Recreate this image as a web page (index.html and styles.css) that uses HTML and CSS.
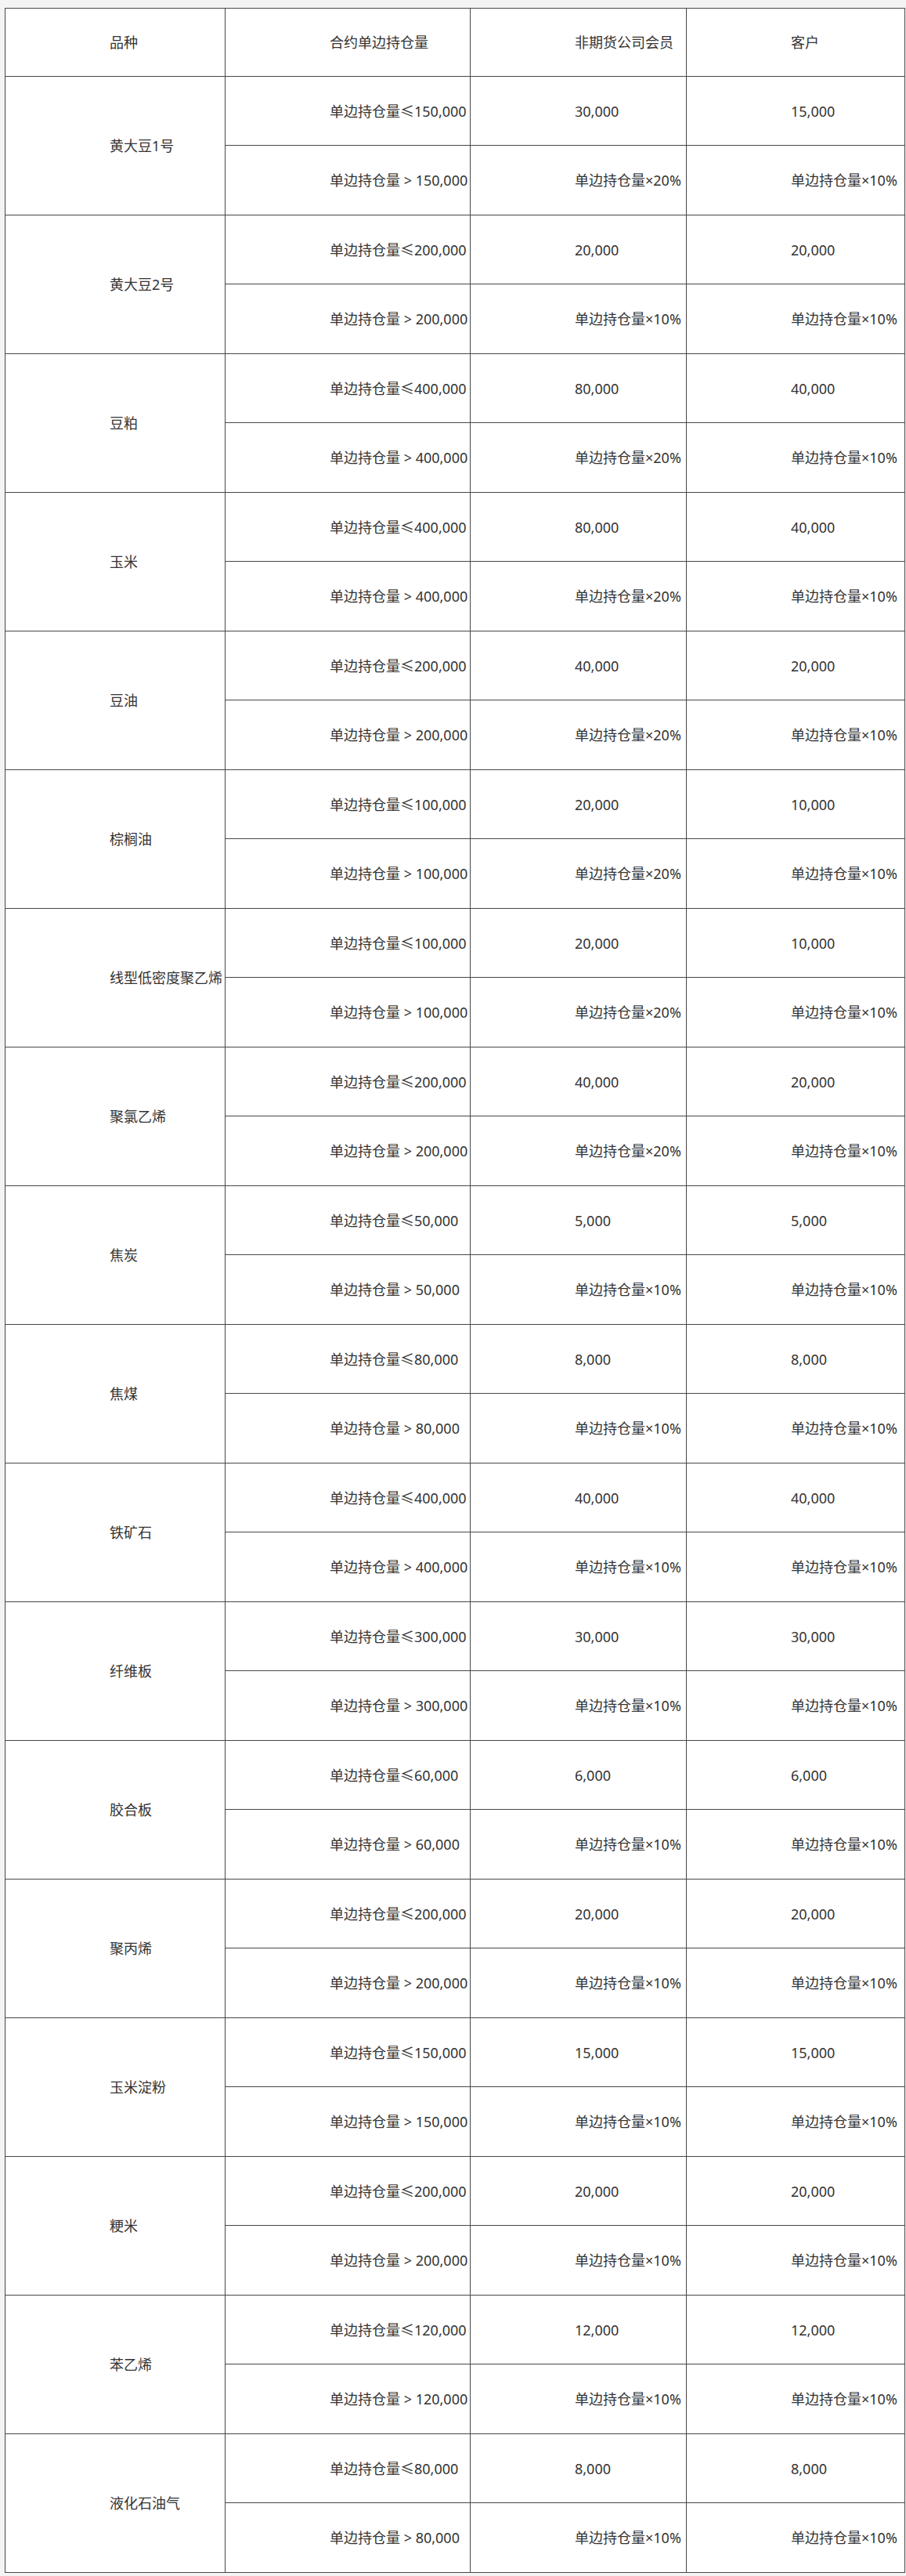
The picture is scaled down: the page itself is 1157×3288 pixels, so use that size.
FILE: index.html
```html
<!DOCTYPE html>
<html lang="zh-CN">
<head>
<meta charset="utf-8">
<title>持仓限额</title>
<link rel="stylesheet" href="styles.css">
</head>
<body>
<table class="limits">
<colgroup>
<col class="c1"><col class="c2"><col class="c3"><col class="c4">
</colgroup>
<tbody>
<tr class="head"><td>品种</td><td>合约单边持仓量</td><td>非期货公司会员</td><td>客户</td></tr>

<tr class="ra"><td rowspan="2">黄大豆1号</td><td>单边持仓量≤150,000</td><td>30,000</td><td>15,000</td></tr>
<tr class="rb"><td>单边持仓量 &gt; 150,000</td><td>单边持仓量×20%</td><td>单边持仓量×10%</td></tr>

<tr class="ra"><td rowspan="2">黄大豆2号</td><td>单边持仓量≤200,000</td><td>20,000</td><td>20,000</td></tr>
<tr class="rb"><td>单边持仓量 &gt; 200,000</td><td>单边持仓量×10%</td><td>单边持仓量×10%</td></tr>

<tr class="ra"><td rowspan="2">豆粕</td><td>单边持仓量≤400,000</td><td>80,000</td><td>40,000</td></tr>
<tr class="rb"><td>单边持仓量 &gt; 400,000</td><td>单边持仓量×20%</td><td>单边持仓量×10%</td></tr>

<tr class="ra"><td rowspan="2">玉米</td><td>单边持仓量≤400,000</td><td>80,000</td><td>40,000</td></tr>
<tr class="rb"><td>单边持仓量 &gt; 400,000</td><td>单边持仓量×20%</td><td>单边持仓量×10%</td></tr>

<tr class="ra"><td rowspan="2">豆油</td><td>单边持仓量≤200,000</td><td>40,000</td><td>20,000</td></tr>
<tr class="rb"><td>单边持仓量 &gt; 200,000</td><td>单边持仓量×20%</td><td>单边持仓量×10%</td></tr>

<tr class="ra"><td rowspan="2">棕榈油</td><td>单边持仓量≤100,000</td><td>20,000</td><td>10,000</td></tr>
<tr class="rb"><td>单边持仓量 &gt; 100,000</td><td>单边持仓量×20%</td><td>单边持仓量×10%</td></tr>

<tr class="ra"><td rowspan="2">线型低密度聚乙烯</td><td>单边持仓量≤100,000</td><td>20,000</td><td>10,000</td></tr>
<tr class="rb"><td>单边持仓量 &gt; 100,000</td><td>单边持仓量×20%</td><td>单边持仓量×10%</td></tr>

<tr class="ra"><td rowspan="2">聚氯乙烯</td><td>单边持仓量≤200,000</td><td>40,000</td><td>20,000</td></tr>
<tr class="rb"><td>单边持仓量 &gt; 200,000</td><td>单边持仓量×20%</td><td>单边持仓量×10%</td></tr>

<tr class="ra"><td rowspan="2">焦炭</td><td>单边持仓量≤50,000</td><td>5,000</td><td>5,000</td></tr>
<tr class="rb"><td>单边持仓量 &gt; 50,000</td><td>单边持仓量×10%</td><td>单边持仓量×10%</td></tr>

<tr class="ra"><td rowspan="2">焦煤</td><td>单边持仓量≤80,000</td><td>8,000</td><td>8,000</td></tr>
<tr class="rb"><td>单边持仓量 &gt; 80,000</td><td>单边持仓量×10%</td><td>单边持仓量×10%</td></tr>

<tr class="ra"><td rowspan="2">铁矿石</td><td>单边持仓量≤400,000</td><td>40,000</td><td>40,000</td></tr>
<tr class="rb"><td>单边持仓量 &gt; 400,000</td><td>单边持仓量×10%</td><td>单边持仓量×10%</td></tr>

<tr class="ra"><td rowspan="2">纤维板</td><td>单边持仓量≤300,000</td><td>30,000</td><td>30,000</td></tr>
<tr class="rb"><td>单边持仓量 &gt; 300,000</td><td>单边持仓量×10%</td><td>单边持仓量×10%</td></tr>

<tr class="ra"><td rowspan="2">胶合板</td><td>单边持仓量≤60,000</td><td>6,000</td><td>6,000</td></tr>
<tr class="rb"><td>单边持仓量 &gt; 60,000</td><td>单边持仓量×10%</td><td>单边持仓量×10%</td></tr>

<tr class="ra"><td rowspan="2">聚丙烯</td><td>单边持仓量≤200,000</td><td>20,000</td><td>20,000</td></tr>
<tr class="rb"><td>单边持仓量 &gt; 200,000</td><td>单边持仓量×10%</td><td>单边持仓量×10%</td></tr>

<tr class="ra"><td rowspan="2">玉米淀粉</td><td>单边持仓量≤150,000</td><td>15,000</td><td>15,000</td></tr>
<tr class="rb"><td>单边持仓量 &gt; 150,000</td><td>单边持仓量×10%</td><td>单边持仓量×10%</td></tr>

<tr class="ra"><td rowspan="2">粳米</td><td>单边持仓量≤200,000</td><td>20,000</td><td>20,000</td></tr>
<tr class="rb"><td>单边持仓量 &gt; 200,000</td><td>单边持仓量×10%</td><td>单边持仓量×10%</td></tr>

<tr class="ra"><td rowspan="2">苯乙烯</td><td>单边持仓量≤120,000</td><td>12,000</td><td>12,000</td></tr>
<tr class="rb"><td>单边持仓量 &gt; 120,000</td><td>单边持仓量×10%</td><td>单边持仓量×10%</td></tr>

<tr class="ra"><td rowspan="2">液化石油气</td><td>单边持仓量≤80,000</td><td>8,000</td><td>8,000</td></tr>
<tr class="rb"><td>单边持仓量 &gt; 80,000</td><td>单边持仓量×10%</td><td>单边持仓量×10%</td></tr>
</tbody>
</table>
</body>
</html>
```

FILE: styles.css
```css
html, body {
  margin: 0;
  background: #f4f4f4;
}
body {
  padding: 10px 0 0 6px;
  font-family: "Noto Sans", "Noto Sans CJK SC", sans-serif;
}
.limits {
  border-collapse: collapse;
  table-layout: fixed;
  width: 1149px;
  background: #ffffff;
}
.limits .c1 { width: 281px; }
.limits .c2 { width: 313px; }
.limits .c3 { width: 276px; }
.limits .c4 { width: 279px; }
.limits td {
  border: 1px solid #474747;
  padding: 0 0 0 133px;
  font-size: 18px;
  line-height: 24px;
  color: #333333;
  white-space: nowrap;
  vertical-align: middle;
  overflow: visible;
}
.limits .head { height: 87px; }
.limits .ra { height: 88px; }
.limits .rb { height: 89px; }
```
